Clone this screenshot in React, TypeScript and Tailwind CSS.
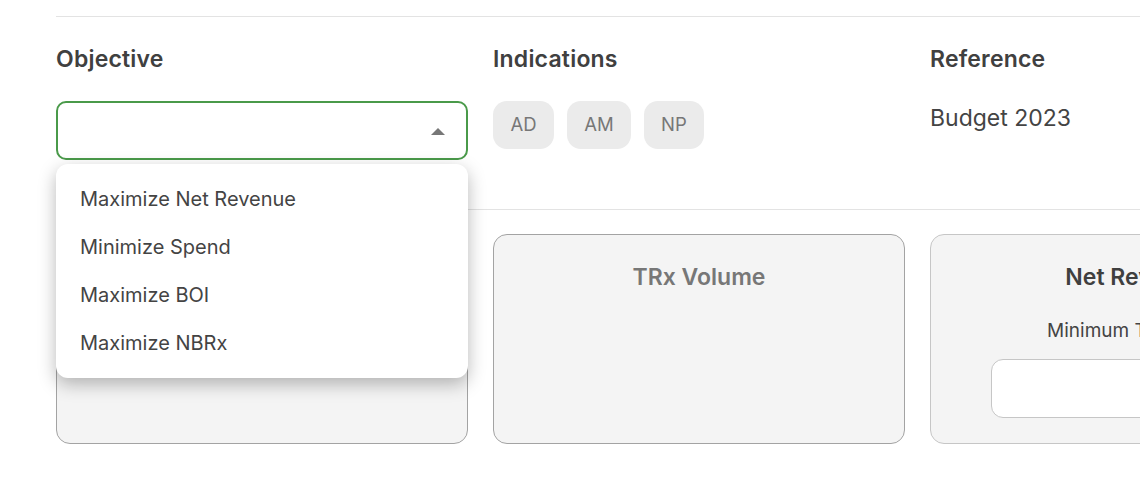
import React from "react";

const font = { fontFamily: "Inter, 'Noto Sans', sans-serif" };

export default function App() {
  const items = ["Maximize Net Revenue", "Minimize Spend", "Maximize BOI", "Maximize NBRx"];
  return (
    <div className="w-[1140px] h-[492px] overflow-hidden bg-white" style={font}>
      <div className="pl-[56px] pt-[16px]">
        <div className="border-t border-[#e3e3e3]" />
        <div className="grid grid-cols-[412px_412px_412px] gap-x-[25px] pt-[27px] w-[1300px]">
          {/* Objective */}
          <div className="relative">
            <div className="text-[23px] leading-[30px] font-semibold text-[#404040] tracking-[0.2px]">Objective</div>
            <div className="mt-[27px] h-[59px] rounded-[10px] border-2 border-[#4a9a4a] bg-white flex items-center justify-end pr-[21px]">
              <svg width="14" height="7" viewBox="0 0 14 7" className="mt-[2px]">
                <path d="M0 7 L7 0 L14 7 Z" fill="#777777" />
              </svg>
            </div>
            <div className="absolute left-0 top-[120px] w-[412px] z-10 bg-white rounded-[12px] shadow-[0_6px_18px_rgba(0,0,0,0.28)] pt-[11px] pb-[11px]">
              {items.map((t) => (
                <div key={t} className="h-[48px] flex items-center pl-[24px] text-[20px] text-[#444444]">
                  {t}
                </div>
              ))}
            </div>
          </div>
          {/* Indications */}
          <div>
            <div className="text-[23px] leading-[30px] font-semibold text-[#404040] tracking-[0.2px]">Indications</div>
            <div className="mt-[27px] flex gap-[12.5px]">
              {["AD", "AM", "NP"].map((c) => (
                <div key={c} className="h-[48px] px-[17.5px] rounded-[14px] bg-[#ebebeb] text-[#777777] text-[18.5px] flex items-center justify-center">
                  {c}
                </div>
              ))}
            </div>
          </div>
          {/* Reference */}
          <div>
            <div className="text-[23px] leading-[30px] font-semibold text-[#404040] tracking-[0.2px]">Reference</div>
            <div className="mt-[29px] text-[23px] leading-[30px] text-[#444444]">Budget 2023</div>
          </div>
        </div>
        <div className="mt-[49px] border-t border-[#e3e3e3]" />
        <div className="grid grid-cols-[412px_412px_412px] gap-x-[25px] pt-[24px] w-[1300px]">
          <div className="h-[210px] rounded-[14px] border border-[#a3a3a3] bg-[#f4f4f4]" />
          <div className="h-[210px] rounded-[14px] border border-[#a3a3a3] bg-[#f4f4f4] flex flex-col items-center pt-[27px]">
            <div className="text-[23px] leading-[30px] font-semibold text-[#777777]">TRx Volume</div>
          </div>
          <div className="h-[210px] rounded-[14px] border border-[#c6c6c6] bg-[#f4f4f4] flex flex-col items-center pt-[27px]">
            <div className="text-[23px] leading-[30px] font-semibold text-[#3f3f3f]">Net Revenue</div>
            <div className="mt-[26px] text-[19px] leading-[26px] text-[#444444]">Minimum Threshold</div>
            <div className="mt-[15px] w-[290px] h-[59px] rounded-[12px] border border-[#c6c6c6] bg-white" />
          </div>
        </div>
      </div>
    </div>
  );
}
